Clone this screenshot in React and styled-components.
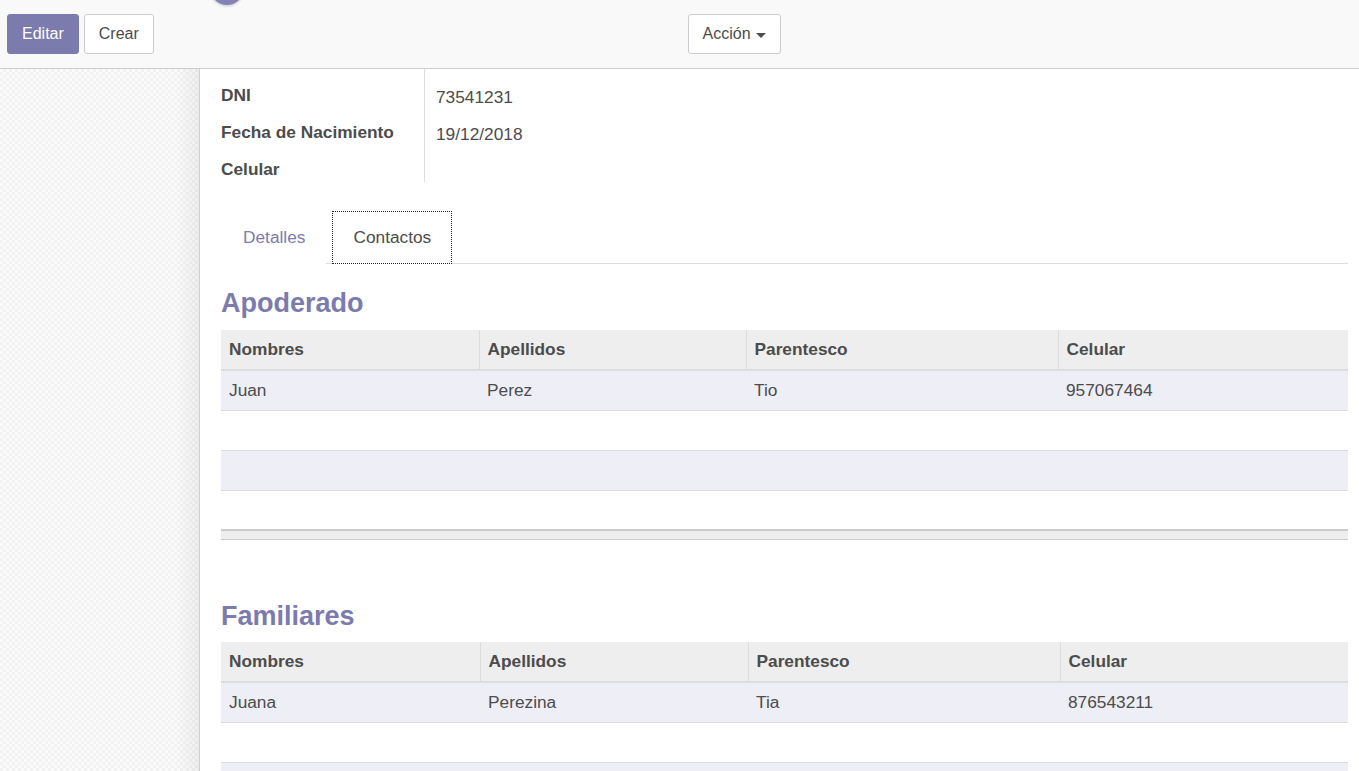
import styled, { createGlobalStyle } from "styled-components";

const GlobalStyle = createGlobalStyle`
  html, body {
    margin: 0;
    padding: 0;
    height: 100%;
    overflow: hidden;
    background: #ffffff;
  }
  body {
    font-family: "Liberation Sans", Arial, sans-serif;
    color: #4c4c4c;
  }
  #root {
    height: 100%;
  }
`;

const apoderados = [
  { nombres: "Juan", apellidos: "Perez", parentesco: "Tio", celular: "957067464" },
];
const familiares = [
  { nombres: "Juana", apellidos: "Perezina", parentesco: "Tia", celular: "876543211" },
];

const App = () => {
  return (
    <Page>
      <GlobalStyle />
      <ControlPanel>
        <Avatar />
        <PanelHalf>
          <Button primary>Editar</Button>
          <Button>Crear</Button>
        </PanelHalf>
        <PanelHalf right>
          <Button>
            Acción <Caret />
          </Button>
        </PanelHalf>
      </ControlPanel>
      <Body>
        <SheetBg />
        <Sheet>
          {/* the sheet is scrolled: the first row sits above the fold */}
          <Group>
            <Label />
            <Value />
            <Label>DNI</Label>
            <Value>73541231</Value>
            <Label>Fecha de Nacimiento</Label>
            <Value>19/12/2018</Value>
            <Label>Celular</Label>
            <Value></Value>
          </Group>

          <Tabs>
            <Tab>Detalles</Tab>
            <Tab active>Contactos</Tab>
          </Tabs>

          <Heading>Apoderado</Heading>
          <ContactTable widths={[258, 267, 312, 290]} rows={apoderados} />

          <Heading spaced>Familiares</Heading>
          <ContactTable widths={[259, 268, 312, 288]} rows={familiares} />
        </Sheet>
      </Body>
    </Page>
  );
};

const ContactTable = ({ widths, rows }) => {
  const filler = Array.from({ length: Math.max(0, 4 - rows.length) });
  return (
    <Table>
      <colgroup>
        {widths.map((w, i) => (
          <col key={i} style={{ width: w }} />
        ))}
      </colgroup>
      <thead>
        <tr>
          <Th>Nombres</Th>
          <Th>Apellidos</Th>
          <Th>Parentesco</Th>
          <Th>Celular</Th>
        </tr>
      </thead>
      <tbody>
        {rows.map((r, i) => (
          <Tr key={i} odd={i % 2 === 0}>
            <Td>{r.nombres}</Td>
            <Td>{r.apellidos}</Td>
            <Td>{r.parentesco}</Td>
            <Td>{r.celular}</Td>
          </Tr>
        ))}
        {filler.map((_, i) => (
          <Tr key={"f" + i} odd={(rows.length + i) % 2 === 0}>
            <Td />
            <Td />
            <Td />
            <Td />
          </Tr>
        ))}
      </tbody>
      <tfoot>
        <tr>
          <Tf colSpan={4} />
        </tr>
      </tfoot>
    </Table>
  );
};

export default App;

const Page = styled.div`
  height: 100vh;
  display: flex;
  flex-direction: column;
`;

const ControlPanel = styled.div`
  position: relative;
  height: 68px;
  flex: 0 0 auto;
  display: flex;
  background: #f9f9f9;
  border-bottom: 1px solid #cccccc;
`;

const Avatar = styled.div`
  position: absolute;
  left: 210px;
  top: -29px;
  width: 34px;
  height: 34px;
  border-radius: 50%;
  background: #8583b6;
  box-shadow: 0 1px 3px rgba(0, 0, 0, 0.2);
`;

const PanelHalf = styled.div`
  width: 50%;
  display: flex;
  align-items: center;
  gap: 5px;
  padding-left: ${(p) => (p.right ? "8px" : "7px")};
  box-sizing: border-box;
`;

const Button = styled.button`
  height: 40px;
  padding: 0 14px;
  border-radius: 3px;
  font-family: "Liberation Sans", Arial, sans-serif;
  font-size: 16px;
  cursor: pointer;
  display: flex;
  align-items: center;
  gap: 5px;
  background: ${(p) => (p.primary ? "#7c7bad" : "#ffffff")};
  color: ${(p) => (p.primary ? "#ffffff" : "#4c4c4c")};
  border: 1px solid ${(p) => (p.primary ? "#7c7bad" : "#cccccc")};
`;

const Caret = styled.span`
  display: inline-block;
  width: 0;
  height: 0;
  margin-top: 2px;
  border-left: 5px solid transparent;
  border-right: 5px solid transparent;
  border-top: 5px solid #4c4c4c;
`;

const Body = styled.div`
  flex: 1;
  display: flex;
  min-height: 0;
`;

const SheetBg = styled.div`
  width: 199px;
  flex: 0 0 auto;
  border-right: 1px solid #cfcfcf;
  background-color: #f6f6f6;
  background-image: linear-gradient(to right, rgba(0, 0, 0, 0) 88%, rgba(0, 0, 0, 0.05) 100%),
    repeating-conic-gradient(#f2f2f2 0 25%, #fbfbfb 0 50%);
  background-size: 100% 100%, 6px 6px;
`;

const Sheet = styled.div`
  flex: 1;
  overflow: hidden;
  background: #ffffff;
  padding: 0 11px 0 21px;
  font-size: 17.3px;
`;

const Group = styled.div`
  display: grid;
  grid-template-columns: 204px 1fr;
  grid-template-rows: 37px 37px 37px 30px;
  margin-top: -28px;
`;

const Label = styled.div`
  font-weight: bold;
  padding-top: 6px;
  box-sizing: border-box;
  border-right: 1px solid #dddddd;
  line-height: 22px;
`;

const Value = styled.div`
  padding: 8px 0 0 11px;
  box-sizing: border-box;
  line-height: 22px;
`;

const Tabs = styled.div`
  display: flex;
  border-bottom: 1px solid #dddddd;
  height: 52px;
  margin-top: 29px;
`;

const Tab = styled.div`
  height: 53px;
  box-sizing: border-box;
  padding: 0 20px 0 21px;
  margin-right: 6px;
  display: flex;
  align-items: center;
  cursor: pointer;
  background: #ffffff;
  color: ${(p) => (p.active ? "#4c4c4c" : "#7c7bad")};
  border: 1px ${(p) => (p.active ? "dotted #222222" : "solid transparent")};
  &:last-child {
    margin-right: 0;
    padding: 0 20px;
  }
`;

const Heading = styled.h2`
  margin: ${(p) => (p.spaced ? "61px 0 11px" : "24px 0 12px")};
  font-size: 27px;
  line-height: 30px;
  font-weight: bold;
  color: #7c7bad;
`;

const Table = styled.table`
  width: 100%;
  table-layout: fixed;
  border-collapse: collapse;
`;

const Th = styled.th`
  height: 40px;
  padding: 0 8px;
  box-sizing: border-box;
  text-align: left;
  font-weight: bold;
  background: #eeeeee;
  border-bottom: 2px solid #dddddd;
  & + & {
    border-left: 1px solid #dddddd;
  }
`;

const Tr = styled.tr`
  background: ${(p) => (p.odd ? "#eeeef6" : "#ffffff")};
  border-bottom: 1px solid #dddddd;
`;

const Td = styled.td`
  height: 40px;
  padding: 0 8px;
  box-sizing: border-box;
`;

const Tf = styled.td`
  height: 8px;
  padding: 0;
  background: #eeeeee;
  border-top: 2px solid #cccccc;
  border-bottom: 1px solid #cccccc;
`;
